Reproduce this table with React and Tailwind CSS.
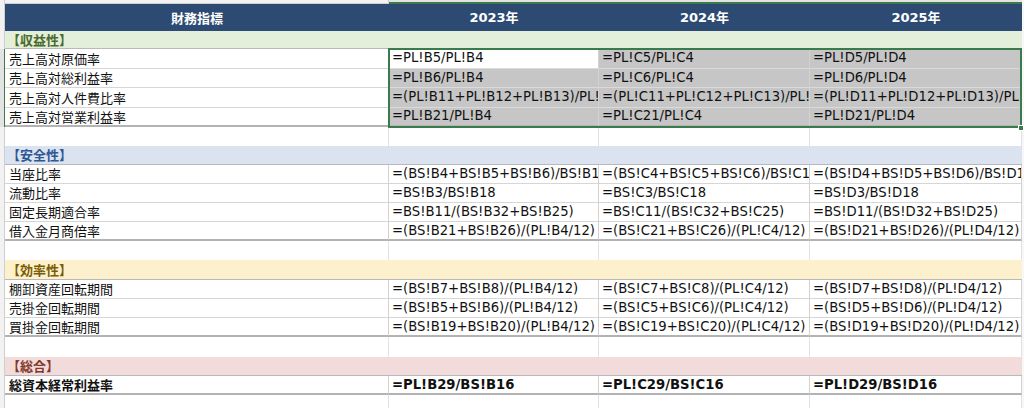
import React from 'react';

const jp = { fontFamily: '"Noto Sans CJK JP", "Noto Sans", sans-serif' };
const fx = { fontFamily: '"DejaVu Sans", "Noto Sans CJK JP", sans-serif' };

const sections = [
  {
    title: '【収益性】',
    bg: 'bg-[#e3efdb]',
    text: 'text-[#4b6b2c]',
    selected: true,
    rows: [
      ['売上高対原価率', '=PL!B5/PL!B4', '=PL!C5/PL!C4', '=PL!D5/PL!D4'],
      ['売上高対総利益率', '=PL!B6/PL!B4', '=PL!C6/PL!C4', '=PL!D6/PL!D4'],
      ['売上高対人件費比率', '=(PL!B11+PL!B12+PL!B13)/PL!B4', '=(PL!C11+PL!C12+PL!C13)/PL!C4', '=(PL!D11+PL!D12+PL!D13)/PL!D4'],
      ['売上高対営業利益率', '=PL!B21/PL!B4', '=PL!C21/PL!C4', '=PL!D21/PL!D4'],
    ],
  },
  {
    title: '【安全性】',
    bg: 'bg-[#dae3ef]',
    text: 'text-[#2f5794]',
    rows: [
      ['当座比率', '=(BS!B4+BS!B5+BS!B6)/BS!B18', '=(BS!C4+BS!C5+BS!C6)/BS!C18', '=(BS!D4+BS!D5+BS!D6)/BS!D18'],
      ['流動比率', '=BS!B3/BS!B18', '=BS!C3/BS!C18', '=BS!D3/BS!D18'],
      ['固定長期適合率', '=BS!B11/(BS!B32+BS!B25)', '=BS!C11/(BS!C32+BS!C25)', '=BS!D11/(BS!D32+BS!D25)'],
      ['借入金月商倍率', '=(BS!B21+BS!B26)/(PL!B4/12)', '=(BS!C21+BS!C26)/(PL!C4/12)', '=(BS!D21+BS!D26)/(PL!D4/12)'],
    ],
  },
  {
    title: '【効率性】',
    bg: 'bg-[#fdf1cd]',
    text: 'text-[#7a5c07]',
    rows: [
      ['棚卸資産回転期間', '=(BS!B7+BS!B8)/(PL!B4/12)', '=(BS!C7+BS!C8)/(PL!C4/12)', '=(BS!D7+BS!D8)/(PL!D4/12)'],
      ['売掛金回転期間', '=(BS!B5+BS!B6)/(PL!B4/12)', '=(BS!C5+BS!C6)/(PL!C4/12)', '=(BS!D5+BS!D6)/(PL!D4/12)'],
      ['買掛金回転期間', '=(BS!B19+BS!B20)/(PL!B4/12)', '=(BS!C19+BS!C20)/(PL!C4/12)', '=(BS!D19+BS!D20)/(PL!D4/12)'],
    ],
  },
  {
    title: '【総合】',
    bg: 'bg-[#f1dcdb]',
    text: 'text-[#82392b]',
    bold: true,
    rows: [['総資本経常利益率', '=PL!B29/BS!B16', '=PL!C29/BS!C16', '=PL!D29/BS!D16']],
  },
];

const widths = ['w-[384px]', 'w-[210px]', 'w-[211px]', 'w-[212px]'];

const Gutter = ({ active }) => (
  <div className={`w-[5px] shrink-0 border-r ${active ? 'border-[#3a7a4c] bg-[#e3e3e3]' : 'border-[#cfcfcf] bg-[#f2f2f2]'}`} />
);

const Tail = () => <div className="flex-1 bg-[#f7f7f7]" />;

const EmptyRow = ({ h = 'h-[19px]' }) => (
  <div className={`flex ${h}`}>
    <Gutter />
    {widths.map((w, i) => (
      <div key={i} className={`${w} shrink-0 bg-white border-r border-[#e2e2e2]`} />
    ))}
    <Tail />
  </div>
);

const SectionRow = ({ s, h = 'h-[19px]' }) => (
  <div className={`flex ${h}`}>
    <Gutter />
    <div className={`w-[1017px] shrink-0 ${s.bg} border-b border-[#b9b9b9] flex items-center pl-[2px]`}>
      <span className={`text-[13px] font-bold ${s.text}`} style={jp}>{s.title}</span>
    </div>
    <Tail />
  </div>
);

const DataRow = ({ row, s, ri, last, h }) => {
  const sel = s.selected;
  return (
    <div className={`flex ${h}`}>
      <Gutter active={sel} />
      {row.map((v, i) => {
        let bg = 'bg-white';
        if (sel && i > 0 && !(ri === 0 && i === 1)) bg = 'bg-[#c6c6c6]';
        const border = last ? 'border-b-2 border-b-[#b3b3b3]' : sel && i > 0 ? 'border-b border-b-[#dadada]' : 'border-b border-b-[#d6d6d6]';
        return (
          <div
            key={i}
            className={`${widths[i]} shrink-0 ${bg} ${border} border-r border-r-[#d2d2d2] flex items-center overflow-hidden whitespace-nowrap ${i === 0 ? 'pl-[4px] text-[13px]' : 'pl-[3px] text-[13.2px]'} text-[#111] ${s.bold ? 'font-bold' : ''}`}
            style={i === 0 ? jp : fx}
          >
            {v}
          </div>
        );
      })}
      <Tail />
    </div>
  );
};

export default function App() {
  return (
    <div className="w-[1024px] h-[408px] overflow-hidden bg-white relative">
      {/* column header strip */}
      <div className="flex h-[4px]">
        <div className="w-[5px] bg-[#f2f2f2] border-r border-[#cfcfcf]" />
        <div className="w-[384px] bg-[#f2f2f2] border-r border-b border-[#cfcfcf]" />
        <div className="w-[633px] bg-[#e3e3e3] border-b-2 border-[#3a7a4c]" />
        <Tail />
      </div>

      {/* header */}
      <div className="flex h-[27px]">
        <Gutter />
        <div className="w-[384px] bg-[#2d4b72] flex items-center justify-center text-white text-[13px] font-bold" style={jp}>財務指標</div>
        {['2023年', '2024年', '2025年'].map((y, i) => (
          <div key={y} className={`${widths[i + 1]} bg-[#2d4b72] flex items-center justify-center text-white text-[13px] font-bold`} style={fx}>
            {y}
          </div>
        ))}
        <Tail />
      </div>

      {sections.map((s, si) => (
        <div key={s.title}>
          <SectionRow s={s} h={si === 0 ? 'h-[18px]' : si === 2 ? 'h-[20px]' : 'h-[19px]'} />
          <div className="relative">
            {s.rows.map((r, ri) => (
              <DataRow key={ri} row={r} s={s} ri={ri} last={ri === s.rows.length - 1} h={s.selected ? 'h-[19.5px]' : 'h-[19px]'} />
            ))}
            {s.selected && (
              <>
                <div className="absolute left-[388px] top-[-1px] w-[634px] bottom-[-1px] border-2 border-[#3a7a4c] pointer-events-none" />
                <div className="absolute left-[1018px] bottom-[-4px] w-[6px] h-[6px] bg-[#3a7a4c] border border-white" />
              </>
            )}
          </div>
          <EmptyRow h={si === 2 ? 'h-[20px]' : 'h-[19px]'} />
        </div>
      ))}
    </div>
  );
}
